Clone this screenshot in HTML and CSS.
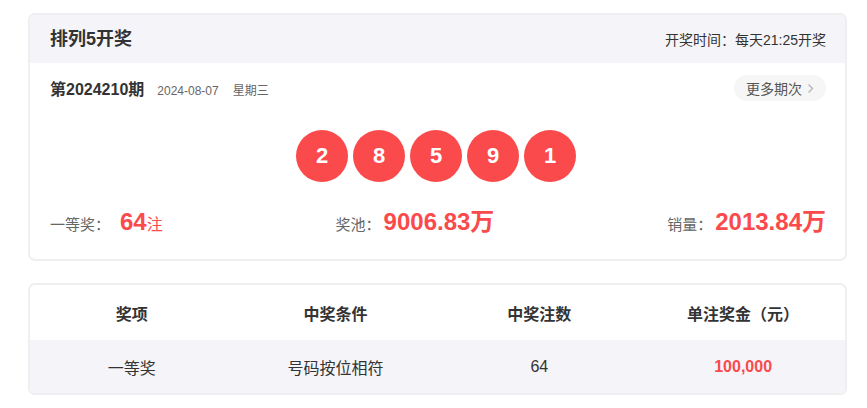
FILE: index.html
```
<!DOCTYPE html>
<html lang="zh-CN">
<head>
<meta charset="utf-8">
<title>排列5开奖</title>
<link rel="stylesheet" href="styles.css">
</head>
<body>
<div class="page">
  <section class="card draw">
    <header class="card-head">
      <h1 class="title">排列5开奖</h1>
      <span class="time">开奖时间：每天21:25开奖</span>
    </header>
    <div class="issue-row">
      <div class="issue">
        <span class="issue-no">第2024210期</span>
        <span class="issue-date">2024-08-07</span>
        <span class="issue-week">星期三</span>
      </div>
      <a class="more">更多期次<svg class="chev" width="7" height="11" viewBox="0 0 7 11"><path d="M1.5 1.5 L5.5 5.5 L1.5 9.5" fill="none" stroke="#b5b5b5" stroke-width="1.3"/></svg></a>
    </div>
    <div class="balls">
      <span class="ball">2</span>
      <span class="ball">8</span>
      <span class="ball">5</span>
      <span class="ball">9</span>
      <span class="ball">1</span>
    </div>
    <div class="stats">
      <div class="stat"><span class="label">一等奖：</span><span class="val gap">64</span><span class="unit">注</span></div>
      <div class="stat"><span class="label">奖池：</span><span class="val">9006.83万</span></div>
      <div class="stat"><span class="label">销量：</span><span class="val">2013.84万</span></div>
    </div>
  </section>
  <section class="card prize">
    <div class="row row-head">
      <div class="cell">奖项</div>
      <div class="cell">中奖条件</div>
      <div class="cell">中奖注数</div>
      <div class="cell">单注奖金（元）</div>
    </div>
    <div class="row row-body">
      <div class="cell">一等奖</div>
      <div class="cell">号码按位相符</div>
      <div class="cell">64</div>
      <div class="cell money">100,000</div>
    </div>
  </section>
</div>
</body>
</html>
```
FILE: styles.css
```
* { box-sizing: border-box; }
html, body { margin: 0; padding: 0; background: #fff; }
body {
  font-family: "Liberation Sans", "Noto Sans CJK SC", sans-serif;
  color: #333;
}
.page {
  width: 819px;
  margin-left: 28px;
  padding-top: 13px;
  display: flex;
  flex-direction: column;
  gap: 22px;
}
.card {
  border: 2px solid #efeff2;
  border-radius: 7px;
  overflow: hidden;
  background: #fff;
}
.card-head {
  height: 48px;
  background: #f5f5f9;
  display: flex;
  align-items: center;
  justify-content: space-between;
  padding: 0 19px 0 20px;
}
.title {
  margin: 0;
  font-size: 18px;
  font-weight: bold;
  color: #333;
  line-height: 24px;
}
.time {
  font-size: 14px;
  color: #333;
}
.issue-row {
  display: flex;
  align-items: center;
  justify-content: space-between;
  padding: 12px 19px 0 20px;
  height: 38px;
}
.issue { display: flex; align-items: baseline; }
.issue-no { font-size: 16px; font-weight: bold; color: #333; }
.issue-date { font-size: 12px; color: #666; margin-left: 13px; }
.issue-week { font-size: 12px; color: #666; margin-left: 14px; }
.more {
  display: flex;
  align-items: center;
  height: 26px;
  padding: 0 12px 0 12px;
  background: #f6f6f6;
  border-radius: 13px;
  font-size: 14px;
  color: #555;
}
.chev { margin-left: 5px; }
.balls {
  display: flex;
  justify-content: center;
  gap: 5px;
  margin-top: 29px;
  padding-right: 3px;
}
.ball {
  width: 52px;
  height: 52px;
  border-radius: 50%;
  background: #fb4a4c;
  color: #fff;
  font-size: 22px;
  font-weight: bold;
  display: flex;
  align-items: center;
  justify-content: center;
}
.stats {
  display: flex;
  justify-content: space-between;
  align-items: baseline;
  padding: 0 19px 0 20px;
  margin-top: 20px;
  height: 57px;
}
.stat { display: flex; align-items: baseline; }
.label { font-size: 15px; color: #666; }
.val { font-size: 24px; font-weight: bold; color: #fb4a4c; margin-left: 3px; }
.val.gap { margin-left: 10px; }
.unit { font-size: 16px; color: #fb4a4c; }
.row { display: flex; height: 55px; align-items: center; }
.row-body { background: #f5f5f9; height: 53px; }
.cell { flex: 1; text-align: center; font-size: 16px; color: #333; }
.row-head .cell { font-weight: bold; }
.money { color: #fb4a4c; font-weight: bold; }
```
